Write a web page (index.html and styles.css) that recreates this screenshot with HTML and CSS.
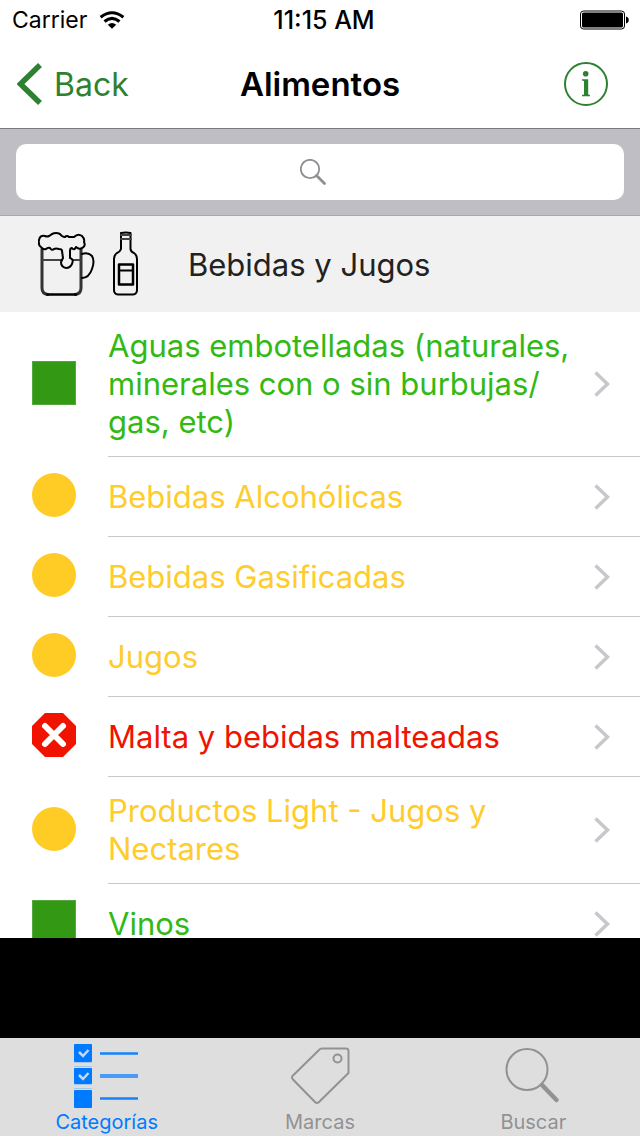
FILE: index.html
```html
<!DOCTYPE html>
<html lang="es">
<head>
<meta charset="utf-8">
<meta name="viewport" content="width=device-width, initial-scale=1">
<title>Alimentos</title>
<link rel="stylesheet" href="styles.css">
</head>
<body>
<div class="app">
  <div class="status">
    <div class="status-left">
      <span>Carrier</span>
      <svg width="26" height="18" viewBox="0 0 26 18" aria-hidden="true">
        <g fill="none" stroke="#000" stroke-width="3">
          <path d="M1.600 6.200 Q13 -2.800 24.400 6.200"/>
          <path d="M5.500 10.500 Q13 4.200 20.500 10.500"/>
        </g>
        <path d="M8.800 13.700 Q13 10.300 17.200 13.700 L13 17.800 Z"/>
      </svg>
    </div>
    <span class="clock">11:15 AM</span>
    <div class="status-right">
      <svg width="50" height="20" viewBox="0 0 50 20" aria-hidden="true">
        <rect x="0.500" y="1" width="44" height="18" rx="3" fill="#fff" stroke="#000"/>
        <rect x="2" y="2.500" width="41" height="15" rx="1.500"/>
        <path d="M46 6.500 C49.700 7 49.700 13 46 13.500 Z"/>
      </svg>
    </div>
  </div>

  <header class="nav">
    <button class="back" type="button">
      <svg width="25" height="42" viewBox="0 0 25 42" aria-hidden="true">
        <path d="M23 2 L3.500 21 L23 40" fill="none" stroke="#2f8132" stroke-width="5.500"/>
      </svg>
      <span>Back</span>
    </button>
    <h1 class="title">Alimentos</h1>
    <button class="info" type="button" aria-label="Información">
      <svg width="44" height="44" viewBox="0 0 44 44" aria-hidden="true">
        <circle cx="22" cy="22" r="21" fill="none" stroke="#2f8132" stroke-width="2"/>
        <circle cx="21.700" cy="11.800" r="2.800" fill="#2f8132"/>
        <path d="M18 17.300 H24.200 V32.500 L26 33 V34.200 H18 V33 L20 32.500 V19 L18 18.600 Z" fill="#2f8132"/>
      </svg>
    </button>
  </header>

  <form class="search" role="search">
    <label class="search-box">
      <input class="search-input" type="search" aria-label="Buscar alimentos">
      <svg class="search-icon" width="26" height="27" viewBox="0 0 26 27" aria-hidden="true">
        <g fill="none" stroke="#8e8e93">
          <circle cx="10" cy="10" r="9.200" stroke-width="1.800"/>
          <path d="M16.500 16.500 L24.500 24.500" stroke-width="2.800" stroke-linecap="round"/>
        </g>
      </svg>
    </label>
  </form>

  <div class="section">
    <svg width="104" height="66" viewBox="0 0 104 66" aria-hidden="true">
      <g fill="none" stroke="#000" stroke-width="2" stroke-linejoin="round" stroke-linecap="round">
        <path d="M4 18 V57 Q4 63 10 63.500 M37 63.500 Q43 63 43 57 V18" stroke="#333" stroke-width="3"/>
        <path d="M9 63.500 H38" stroke-width="2.500"/>
        <path d="M5 29 H24 M35 29 H42" stroke="#444"/>
        <path d="M24 20 Q24 18 21 18 Q18 17 16 18 Q14 20 12 17 Q10 16 8 18 Q5 19 3 16 Q0 14 1 9 Q2 4 7 5 Q9 6 11 5 Q13 4 14 3 Q18 1 22 3 Q24 6 27 6 Q29 4 31 6 Q34 6 36 6 Q40 2 44 5 Q47 8 46 11 Q48 15 44 17 Q41 19 38 16 Q36 20 34 17 Q32 17 32 20 L32 27 Q36 28 34 33 Q32 37 28 37 Q23 36 23 31 L25 27 Z"/>
        <path d="M44 23 Q50 21 54 25 Q57 30 54 38 Q51 47 44 47"/>
        <path d="M83 2 V18 Q82 21 79 22 Q76 24 76 28 V59 Q76 63 80 63.500 H95 Q99 63 99 59 V28 Q99 24 96 22 Q93 21 92.500 18 V2 Q88 1 83 2 Z"/>
        <path d="M83 4 H93 M83 8 H93" stroke="#444"/>
        <rect x="81" y="33.500" width="14" height="20" stroke-width="2.500"/>
        <path d="M82 39.500 H94"/>
      </g>
    </svg>
    <h2 class="section-title">Bebidas y Jugos</h2>
  </div>

  <main class="list-area">
    <ul class="list">
      <li><a class="row green" href="#aguas"><span class="mark square"></span><span class="cell"><span class="label">Aguas embotelladas (naturales, minerales con o sin burbujas/<wbr>gas, etc)</span><svg class="chev" viewBox="0 0 16 26" aria-hidden="true"><path d="M1.500 1.500 L13.500 13 L1.500 24.500"/></svg></span></a></li>
      <li><a class="row yellow" href="#alcoholicas"><span class="mark circle"></span><span class="cell"><span class="label">Bebidas Alcohólicas</span><svg class="chev" viewBox="0 0 16 26" aria-hidden="true"><path d="M1.500 1.500 L13.500 13 L1.500 24.500"/></svg></span></a></li>
      <li><a class="row yellow" href="#gasificadas"><span class="mark circle"></span><span class="cell"><span class="label">Bebidas Gasificadas</span><svg class="chev" viewBox="0 0 16 26" aria-hidden="true"><path d="M1.500 1.500 L13.500 13 L1.500 24.500"/></svg></span></a></li>
      <li><a class="row yellow" href="#jugos"><span class="mark circle"></span><span class="cell"><span class="label">Jugos</span><svg class="chev" viewBox="0 0 16 26" aria-hidden="true"><path d="M1.500 1.500 L13.500 13 L1.500 24.500"/></svg></span></a></li>
      <li><a class="row red" href="#malta"><svg class="mark" viewBox="0 0 44 44" aria-hidden="true"><path d="M13 0 H31 L44 13 V31 L31 44 H13 L0 31 V13 Z" fill="#f01300"/><path d="M13 13 L31 31 M31 13 L13 31" stroke="#fff" stroke-width="6" stroke-linecap="round"/></svg><span class="cell"><span class="label">Malta y bebidas malteadas</span><svg class="chev" viewBox="0 0 16 26" aria-hidden="true"><path d="M1.500 1.500 L13.500 13 L1.500 24.500"/></svg></span></a></li>
      <li><a class="row yellow" href="#light"><span class="mark circle"></span><span class="cell"><span class="label">Productos Light - Jugos y Nectares</span><svg class="chev" viewBox="0 0 16 26" aria-hidden="true"><path d="M1.500 1.500 L13.500 13 L1.500 24.500"/></svg></span></a></li>
      <li><a class="row green" href="#vinos"><span class="mark square"></span><span class="cell"><span class="label">Vinos</span><svg class="chev" viewBox="0 0 16 26" aria-hidden="true"><path d="M1.500 1.500 L13.500 13 L1.500 24.500"/></svg></span></a></li>
    </ul>
  </main>

  <div class="banner"></div>

  <nav class="tabs">
    <a class="tab active" href="#categorias">
      <svg width="66" height="66" viewBox="0 0 66 66" aria-hidden="true">
        <g fill="#007aff">
          <rect x="0" y="1" width="18" height="18" rx="1"/>
          <rect x="0" y="25" width="18" height="16" rx="1"/>
          <rect x="0" y="47" width="18" height="18" rx="1"/>
        </g>
        <g fill="#a9c5e6">
          <rect x="0" y="19" width="18" height="1"/><rect x="0" y="23" width="18" height="1"/>
          <rect x="0" y="41" width="18" height="1"/><rect x="0" y="45" width="18" height="1"/>
        </g>
        <path d="M5 9 L9 13 L14.500 7 M5 32 L9 36 L14.500 30" fill="none" stroke="#c5d9f0" stroke-width="2.500"/>
        <path d="M26 10.500 H64 M26 55.500 H64" stroke="#1482fb" stroke-width="2.500"/>
        <path d="M26 33 H64" stroke="#4a9bf5" stroke-width="4"/>
      </svg>
      <span>Categorías</span>
    </a>
    <a class="tab" href="#marcas">
      <svg width="66" height="66" viewBox="0 0 66 66" aria-hidden="true">
        <g fill="none" stroke="#929292" stroke-width="2" stroke-linejoin="round">
          <path d="M35 5.500 H59 Q61.500 5.500 61.500 8 V30 L32 59 Q30 61 28 59 L6 36.500 Q4 34 6 32.500 L32 7 Q33 5.500 35 5.500 Z"/>
          <circle cx="50.500" cy="15.500" r="4"/>
        </g>
      </svg>
      <span>Marcas</span>
    </a>
    <a class="tab" href="#buscar">
      <svg width="66" height="66" viewBox="0 0 66 66" aria-hidden="true">
        <g fill="none" stroke="#929292">
          <circle cx="27" cy="26.500" r="20.500" stroke-width="2"/>
          <path d="M42 42 L56.500 57" stroke-width="4.500" stroke-linecap="round"/>
        </g>
      </svg>
      <span>Buscar</span>
    </a>
  </nav>
</div>
</body>
</html>
```

FILE: styles.css
```css
* { box-sizing: border-box; }

body {
  margin: 0;
  background: #fff;
  color: #000;
  font-family: Inter, "Liberation Sans", sans-serif;
}

svg { display: block; flex: none; }
a { color: inherit; text-decoration: none; }
button { padding: 0; border: 0; background: none; font: inherit; color: #2f8132; }

.app {
  display: flex;
  flex-direction: column;
  height: 100vh;
}

.app > * { flex: none; }

.status {
  display: grid;
  grid-template-columns: 1fr auto 1fr;
  align-items: center;
  height: 40px;
  padding: 0 10px 0 12px;
  font-size: 23px;
}
.status-left { display: flex; align-items: center; gap: 12px; }
.status-right { display: flex; justify-content: flex-end; }
.clock { font-weight: 500; font-size: 25px; padding-left: 6px; }

.nav {
  display: grid;
  grid-template-columns: 1fr auto 1fr;
  align-items: center;
  height: 88px;
  padding: 0 32px 0 17px;
}
.back { display: flex; align-items: center; gap: 12px; font-size: 32px; }
.title { margin: 0; padding-left: 15px; font-size: 33px; font-weight: 600; }
.info { justify-self: end; }

.search {
  padding: 15px 16px;
  background: #bfbec4;
  border-top: 1px solid #7b7b7f;
  border-bottom: 1px solid #a9a9ad;
}
.search-box { display: grid; align-items: center; }
.search-input {
  grid-area: 1 / 1;
  width: 100%;
  height: 56px;
  padding: 0 16px;
  border: 0;
  border-radius: 10px;
  background: #fff;
  font: inherit;
  font-size: 28px;
}
.search-icon { grid-area: 1 / 1; justify-self: center; margin-right: 14px; }

.section {
  display: flex;
  align-items: center;
  gap: 46px;
  height: 96px;
  padding: 0 38px;
  background: #f1f1f1;
}
.section-title { margin: 0; color: #222; font-size: 31px; font-weight: 400; }

.app > .list-area { flex: 1; min-height: 0; overflow: hidden; }
.list { margin: 0; padding: 0; list-style: none; }
.row {
  display: flex;
  align-items: center;
  gap: 32px;
  padding-left: 32px;
  font-size: 31px;
  line-height: 38px;
}
.mark { flex: none; width: 44px; height: 44px; margin-bottom: 4px; }
.square { background: #339813; border: 1px solid #55a83d; }
.circle { border-radius: 50%; background: #ffcc26; }
.cell {
  display: flex;
  flex: 1;
  align-items: center;
  justify-content: space-between;
  gap: 16px;
  min-height: 80px;
  padding: 15px 30px 15px 0;
  border-bottom: 1px solid #c8c7cc;
}
.green { color: #32b914; }
.yellow { color: #ffcc2c; }
.red { color: #f01300; }
.chev { width: 16px; height: 26px; fill: none; stroke: #c7c7cc; stroke-width: 3.5; }

.banner { height: 100px; background: #000; }

.tabs {
  display: grid;
  grid-template-columns: repeat(3, 1fr);
  height: 98px;
  background: #dedede;
  color: #929292;
  font-size: 20px;
  line-height: 26px;
}
.tab { display: flex; flex-direction: column; align-items: center; padding-top: 5px; }
.active { color: #007aff; }
```
